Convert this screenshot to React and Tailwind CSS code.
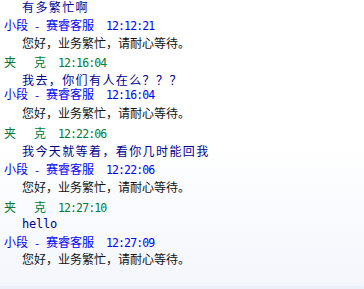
const CJK = "font-['Noto_Sans_CJK_SC',sans-serif]";
const MONO = "font-['DejaVu_Sans_Mono','Noto_Sans_CJK_SC',monospace]";

const rows = [
  { kind: "cmsg", text: "有多繁忙啊", h: "h-[18px]" },
  { kind: "ahead", time: "12:12:21", h: "h-[18px]" },
  { kind: "amsg", h: "h-[19px]" },
  { kind: "chead", time: "12:16:04", h: "h-[18px]" },
  { kind: "cmsg", text: "我去，你们有人在么？？？", h: "h-[14px]" },
  { kind: "ahead", time: "12:16:04", h: "h-[19px]" },
  { kind: "amsg", h: "h-[20px]" },
  { kind: "chead", time: "12:22:06", h: "h-[18px]" },
  { kind: "cmsg", text: "我今天就等着，看你几时能回我", h: "h-[18px]" },
  { kind: "ahead", time: "12:22:06", h: "h-[18px]" },
  { kind: "amsg", h: "h-[20px]" },
  { kind: "chead", time: "12:27:10", h: "h-[17px]" },
  { kind: "cmsg", text: "hello", ascii: true, h: "h-[18px]" },
  { kind: "ahead", time: "12:27:09", h: "h-[17px]" },
  { kind: "amsg", h: "h-[18px]" },
];

function Time({ value, color }) {
  return (
    <span className={`${MONO} text-[11.5px] tracking-[-0.9px] ${color}`}>{value}</span>
  );
}

function Row({ row }) {
  if (row.kind === "ahead") {
    return (
      <div className={`${row.h} flex items-baseline pl-[4px] text-[#0000ff]`}>
        <span className={`${CJK} text-[12px]`}>小段</span>
        <span className={`${MONO} text-[11px] w-[18px] text-center`}>-</span>
        <span className={`${CJK} text-[12px]`}>赛睿客服</span>
        <span className="w-[12px]" />
        <Time value={row.time} color="text-[#0000ff]" />
      </div>
    );
  }
  if (row.kind === "chead") {
    return (
      <div className={`${row.h} flex items-baseline pl-[4px] text-[#007a3d]`}>
        <span className={`${CJK} text-[12px]`}>夹</span>
        <span className="w-[18px]" />
        <span className={`${CJK} text-[12px]`}>克</span>
        <span className="w-[12px]" />
        <Time value={row.time} color="text-[#007a3d]" />
      </div>
    );
  }
  if (row.kind === "amsg") {
    return (
      <div className={`${row.h} pl-[22px] ${CJK} text-[12px] text-[#111111]`}>
        您好，业务繁忙，请耐心等待。
      </div>
    );
  }
  return (
    <div
      className={`${row.h} pl-[22px] text-[#00008f] ${
        row.ascii ? `${MONO} text-[12px] tracking-[-0.2px]` : `${CJK} text-[12px] tracking-[1.4px]`
      }`}
    >
      {row.text}
    </div>
  );
}

export default function App() {
  return (
    <div className="w-[364px] h-[289px] overflow-hidden flex flex-col bg-gradient-to-b from-white via-white to-[#f3f6fc]">
      <div className="flex-1 leading-[14px]">
        {rows.map((r, i) => (
          <Row key={i} row={r} />
        ))}
      </div>
      <div className="h-[3px] bg-[#ebf0f9]" />
    </div>
  );
}
